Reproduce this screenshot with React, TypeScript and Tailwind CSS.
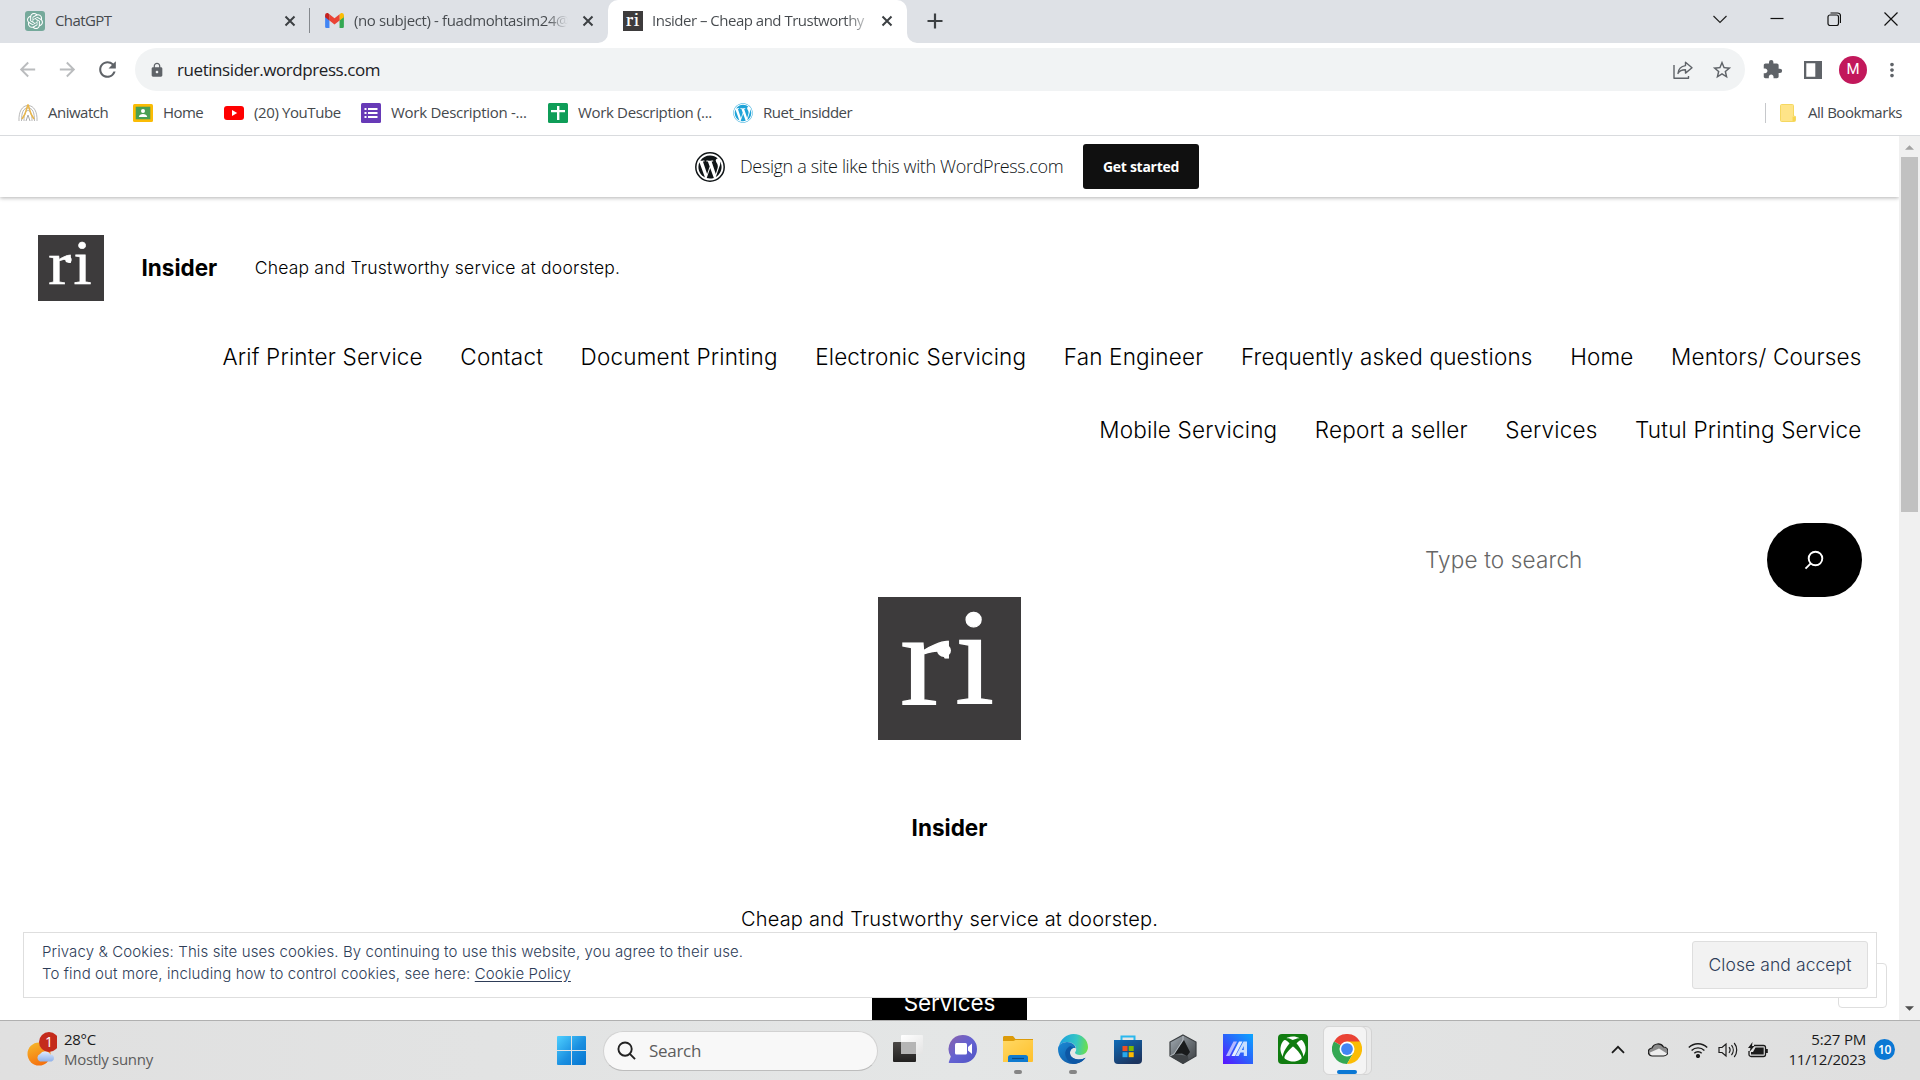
import type { ReactNode } from "react";
import { SiOpenai } from "react-icons/si";
import { FaWordpress, FaXbox } from "react-icons/fa";
import {
  MdArrowBack,
  MdArrowForward,
  MdExtension,
  MdLock,
  MdMoreVert,
  MdRefresh,
  MdStarBorder,
} from "react-icons/md";

function CloseGlyph() {
  return (
    <svg viewBox="0 0 12 12" className="size-3 shrink-0" stroke="#3c4043" strokeWidth="2" fill="none">
      <path d="M1.5 1.5l9 9M10.5 1.5l-9 9" />
    </svg>
  );
}

function RiLogo({ className }: { className: string }) {
  return (
    <svg viewBox="0 0 143 143" className={className}>
      <rect width="143" height="143" fill="#3d3b3c" />
      <g fill="#fff" stroke="#fff" strokeWidth="1.2" fontSize="133" fontFamily="Liberation Serif, serif">
        <text transform="translate(22 106.5) scale(1.12 1)">r</text>
        <text transform="translate(77 106.500) scale(1.060 1.030)">i</text>
      </g>
      <ellipse cx="66" cy="53.500" rx="7" ry="6.500" fill="#fff" />
    </svg>
  );
}

function Gmail() {
  return (
    <svg viewBox="0 0 20 16" className="h-[15px] w-[19px] shrink-0">
      <path d="M0 2.5v12A1.4 1.4 0 0 0 1.4 16H4.6V6z" fill="#4285f4" />
      <path d="M20 2.5v12a1.4 1.4 0 0 1-1.4 1.5h-3.2V6z" fill="#34a853" />
      <path d="M15.4 1.3V8L20 4.4V2.2C20 .2 17.8-.6 16.4.5z" fill="#fbbc04" />
      <path d="M4.6 8V1.4L10 5.6l5.4-4.2V8L10 12.200z" fill="#ea4335" />
      <path d="M0 2.200v2.200L4.600 8V1.400L3.600.5C2.200-.6 0 .2 0 2.200z" fill="#c5221f" />
    </svg>
  );
}

function TabStrip() {
  return (
    <div className="flex h-[43px] bg-[#dee1e6] text-[15px] text-[#45494d]">
      <div className="flex w-[310px] items-center pb-0.5 pl-[25px]">
        <div className="flex size-5 items-center justify-center rounded-[3px] bg-[#75a99b]">
          <SiOpenai className="size-4 text-white" />
        </div>
        <span className="ml-2.5 flex-1 tracking-[-0.6px]">ChatGPT</span>
        <div className="mr-[13px]"><CloseGlyph /></div>
        <div className="h-[25px] w-px bg-[#84888d]" />
      </div>
      <div className="flex w-[298px] items-center pb-0.5 pl-[15px]">
        <Gmail />
        <span className="ml-2.5 w-[214px] overflow-hidden bg-linear-to-r from-[#45494d] from-90% to-transparent bg-clip-text whitespace-nowrap tracking-[-0.39px] text-transparent">
          (no subject) - fuadmohtasim24@
        </span>
        <div className="ml-3.5"><CloseGlyph /></div>
      </div>
      <div className="relative flex w-[299px] items-center rounded-t-[10px] bg-white pb-0.5 pl-[15px]">
        <svg viewBox="0 0 10 10" className="absolute bottom-0 -left-2.5 size-2.5" fill="#fff">
          <path d="M10 0v10H0A10 10 0 0 0 10 0z" />
        </svg>
        <svg viewBox="0 0 10 10" className="absolute -right-2.5 bottom-0 size-2.5" fill="#fff">
          <path d="M0 0v10h10A10 10 0 0 1 0 0z" />
        </svg>
        <RiLogo className="size-5" />
        <span className="ml-[9px] w-[214px] overflow-hidden bg-linear-to-r from-[#45494d] from-90% to-[#45494d]/30 bg-clip-text whitespace-nowrap tracking-[-0.5px] text-transparent">
          Insider – Cheap and Trustworthy
        </span>
        <div className="ml-[15px]"><CloseGlyph /></div>
      </div>
      <svg viewBox="0 0 16 16" className="mt-[13px] ml-5 size-4" stroke="#3c4043" strokeWidth="2.200" fill="none">
        <path d="M8 0.500v15M.5 8h15" />
      </svg>
      <div className="ml-auto flex items-center gap-[43px] pr-[22px] pb-[5px]">
        <svg viewBox="0 0 14 14" className="size-3.5" stroke="#222" strokeWidth="1.200" fill="none"><path d="M.5 4L7 10.500 13.500 4" /></svg>
        <svg viewBox="0 0 14 14" className="size-3.5" stroke="#111" strokeWidth="1.200" fill="none"><path d="M.5 6.500h13" /></svg>
        <svg viewBox="0 0 14 14" className="size-3.5" stroke="#111" strokeWidth="1.200" fill="none">
          <rect x="1" y="3" width="10.500" height="10.500" rx="2" />
          <path d="M3.500 1H10.500a3 3 0 0 1 3 3v7" />
        </svg>
        <svg viewBox="0 0 14 14" className="size-3.5" stroke="#111" strokeWidth="1.200" fill="none"><path d="M.5.5l13 13M13.500.5l-13 13" /></svg>
      </div>
    </div>
  );
}

function Toolbar() {
  return (
    <div className="flex h-[53px] items-center bg-white pl-4 text-[#5f6368]">
      <MdArrowBack className="size-[23px] text-[#babcbe]" />
      <MdArrowForward className="ml-[17px] size-[23px] text-[#babcbe]" />
      <MdRefresh className="ml-4 size-[25px]" />
      <div className="ml-[15px] flex h-[43px] w-[1610px] items-center rounded-full bg-[#f1f3f4]">
        <MdLock className="ml-3.5 size-4" />
        <span className="ml-3 text-[17px] tracking-[-0.43px] text-[#202124]">ruetinsider.wordpress.com</span>
        <svg viewBox="0 0 20 20" className="mr-[18px] ml-auto size-5" fill="none" stroke="#5f6368" strokeWidth="1.400" strokeLinejoin="round">
          <path d="M1 5v13.300h14.500V16" />
          <path d="M12.500 2.200L19 7.700l-6.500 5.400V9.800C9 9.800 6.500 10.700 5 13.500 5.300 9.500 8 6.200 12.500 5.600z" />
        </svg>
        <MdStarBorder className="mr-3 size-[22px]" />
      </div>
      <MdExtension className="ml-[17px] size-[21px]" />
      <svg viewBox="0 0 18 18" className="ml-[21px] size-[18px]">
        <path d="M0 0h18v18H0zM2.300 2.300v13.400h9V2.300z" fill="#5f6368" fillRule="evenodd" />
      </svg>
      <div className="ml-[17px] flex size-7 items-center justify-center rounded-full bg-[#c2185b] font-['Roboto'] text-[15px] text-white">M</div>
      <MdMoreVert className="ml-3.5 size-[22px]" />
    </div>
  );
}

function Bookmark({ icon, label, className }: { icon: ReactNode; label: string; className: string }) {
  return (
    <div className={`flex items-center gap-2.5 whitespace-nowrap ${className}`}>
      {icon}
      <span className="pb-0.5">{label}</span>
    </div>
  );
}

function BookmarksBar() {
  return (
    <div className="flex h-10 items-center border-b border-[#d9dbde] bg-white pb-[5px] pl-[18px] text-[15px] text-[#45494d]">
      <Bookmark
        className="w-[115px] tracking-[-0.5px]"
        label="Aniwatch"
        icon={
          <svg viewBox="0 0 20 20" className="size-5" fill="none" strokeWidth="1">
            <path d="M1 18C.5 9 4 2.500 10 2.500S19.500 9 19 18M3.500 18c0-9 2-13 6.500-13s6.500 4 6.500 13M6 18c0-7 1.500-10.500 4-10.500s4 3.500 4 10.500" stroke="#b8b8b8" />
            <path d="M10 1.500L7 11l-3 5M10 1.500L13 11l3 5" stroke="#e9b64b" strokeWidth="1.500" />
            <path d="M8 18l2-6 2 6" stroke="#aaa" />
          </svg>
        }
      />
      <Bookmark
        className="w-[91px] tracking-[-0.55px]"
        label="Home"
        icon={
          <svg viewBox="0 0 20 18" className="h-[18px] w-5">
            <rect width="20" height="18" rx="1.500" fill="#fbbc05" />
            <rect x="2.700" y="2.700" width="14.600" height="12.600" fill="#4a9f52" />
            <circle cx="10" cy="7" r="2" fill="#fff" />
            <path d="M5.800 13c0-2 2.300-3 4.200-3s4.200 1 4.200 3z" fill="#fff" />
          </svg>
        }
      />
      <Bookmark
        className="w-[137px] tracking-[-0.4px]"
        label="(20) YouTube"
        icon={
          <svg viewBox="0 0 20 14" className="h-3.5 w-5">
            <rect width="20" height="14" rx="3" fill="#f00" />
            <path d="M8 4l5.200 3L8 10z" fill="#fff" />
          </svg>
        }
      />
      <Bookmark
        className="w-[187px] tracking-[-0.28px]"
        label="Work Description -..."
        icon={
          <svg viewBox="0 0 20 20" className="size-5">
            <rect width="20" height="20" rx="1.500" fill="#673ab7" />
            <path d="M3.500 5h2v2h-2zm3.500 0h9.500v2H7zm-3.500 4h2v2h-2zM7 9h9.500v2H7zm-3.500 4h2v2h-2zM7 13h9.500v2H7z" fill="#fff" />
          </svg>
        }
      />
      <Bookmark
        className="w-[185px] tracking-[-0.34px]"
        label="Work Description (..."
        icon={
          <svg viewBox="0 0 20 20" className="size-5">
            <rect width="20" height="20" rx="1.500" fill="#0f9d58" />
            <path d="M9 3h2.400v4H17v2.200h-5.600V17H9V9.200H3V7h6z" fill="#fff" />
          </svg>
        }
      />
      <Bookmark
        className="tracking-[-0.5px]"
        label="Ruet_insidder"
        icon={<FaWordpress className="size-5 text-[#1fa3d8]" />}
      />
      <div className="ml-auto h-5 w-px bg-[#c6c8cb]" />
      <svg viewBox="0 0 16 18" className="ml-3.5 h-[18px] w-4">
        <path d="M1.500.5h11a1 1 0 0 1 1 1V12l2 .5v4a1 1 0 0 1-1 1h-13a1 1 0 0 1-1-1v-15a1 1 0 0 1 1-1z" fill="#fee488" stroke="#f5d860" />
        <path d="M12.500 12.500v4.500h2.500v-4z" fill="#f7d54f" />
      </svg>
      <span className="mr-[18px] ml-3 pb-0.5 tracking-[-0.46px]">All Bookmarks</span>
    </div>
  );
}

function Banner() {
  return (
    <div className="flex h-[61px] shrink-0 items-center bg-white pl-[695px] font-['Open_Sans',sans-serif] shadow-[0_1px_4px_rgba(0,0,0,0.3)]">
      <svg viewBox="0 0 30 30" className="size-[30px]">
        <circle cx="15" cy="15" r="14.200" fill="#fff" stroke="#101517" strokeWidth="1.500" />
        <svg x="1.500" y="1.500" width="27" height="27" viewBox="8 8 496 496">
          <path
            fill="#101517"
            d="M61.700 169.400l101.500 278C92.200 413 43.300 340.200 43.300 256c0-30.900 6.600-60.100 18.400-86.600zm337.900 75.900c0-26.300-9.400-44.500-17.500-58.700-10.800-17.500-20.900-32.400-20.900-49.900 0-19.600 14.800-37.800 35.700-37.800.9 0 1.800.1 2.800.2-37.900-34.700-88.300-55.900-143.700-55.900-74.300 0-139.700 38.100-177.800 95.900 5 .2 9.700.3 13.700.3 22.200 0 56.700-2.700 56.700-2.700 11.500-.7 12.800 16.200 1.400 17.500 0 0-11.500 1.300-24.300 2l77.500 230.400L249.800 247l-33.100-90.800c-11.500-.7-22.300-2-22.300-2-11.500-.7-10.100-18.200 1.300-17.500 0 0 35.100 2.700 56 2.700 22.200 0 56.700-2.700 56.700-2.700 11.500-.7 12.800 16.200 1.400 17.500 0 0-11.500 1.300-24.300 2l76.900 228.700 21.200-70.900c9-29.400 16-50.500 16-68.700zm-139.900 29.300l-63.800 185.500c19.100 5.600 39.200 8.700 60.100 8.700 24.800 0 48.500-4.300 70.600-12.100-.6-.9-1.100-1.900-1.500-2.900l-65.400-179.200zm183-120.700c.9 6.800 1.400 14 1.400 21.900 0 21.600-4 45.800-16.200 76.200l-65 187.900C426.200 403 468.700 334.500 468.700 256c0-37-9.400-71.800-26-102.100z"
          />
        </svg>
      </svg>
      <span className="ml-[15px] w-[343px] text-[18px] font-light whitespace-nowrap tracking-[-0.36px] text-[#101517]">
        Design a site like this with WordPress.com
      </span>
      <button className="h-[45px] w-[116px] rounded-[3px] bg-[#101010] pb-px text-[14px] font-bold tracking-[-0.27px] text-white">
        Get started
      </button>
    </div>
  );
}

const navItems = [
  "Arif Printer Service",
  "Contact",
  "Document Printing",
  "Electronic Servicing",
  "Fan Engineer",
  "Frequently asked questions",
  "Home",
  "Mentors/ Courses",
  "Mobile Servicing",
  "Report a seller",
  "Services",
  "Tutul Printing Service",
];

function Site() {
  return (
    <div className="relative flex h-full flex-1 flex-col overflow-hidden bg-white font-['Inter'] text-black">
      <Banner />
      <header className="mt-[38px] flex items-center pl-[38px]">
        <RiLogo className="size-[66px]" />
        <span className="ml-[37.5px] text-[22.5px] font-bold">Insider</span>
        <span className="ml-[37.5px] text-[17.5px] font-light tracking-[0.19px]">Cheap and Trustworthy service at doorstep.</span>
      </header>
      <nav className="mt-[39px] ml-[200px] flex flex-wrap justify-end gap-x-[37.5px] gap-y-[39px] pr-[37.5px] text-[22.5px] leading-[34px] font-light tracking-[0.18px]">
        {navItems.map((item) => (
          <a key={item}>{item}</a>
        ))}
      </nav>
      <div className="mt-[76px] flex items-center justify-end pr-[37px]">
        <span className="w-[342px] text-[22.5px] font-light tracking-[0.16px] text-[#666]">Type to search</span>
        <button className="flex h-[74px] w-[95px] items-center justify-center rounded-[37px] bg-black pr-0.5">
          <svg viewBox="0 0 20 20" className="size-5" stroke="#fff" strokeWidth="1.900" fill="none">
            <circle cx="11.500" cy="8.500" r="6.800" />
            <path d="M6.800 13.400L1.500 18.700" />
          </svg>
        </button>
      </div>
      <div className="flex flex-col items-center">
        <RiLogo className="size-[143px]" />
        <span className="mt-[71px] text-[22.5px] leading-[34px] font-bold">Insider</span>
        <span className="mt-[59px] text-[20px] leading-[30px] font-light tracking-[0.21px]">Cheap and Trustworthy service at doorstep.</span>
        <div className="mt-[41px] flex h-14 w-[155px] justify-center bg-black pt-[11px] text-[22.5px] leading-[34px] tracking-[-0.1px] text-white">
          Services
        </div>
      </div>
      <div className="absolute right-3 bottom-3 h-[45px] w-[49px] rounded-sm border border-[#dedede] bg-white" />
      <div className="absolute right-[22px] bottom-[22px] left-[23px] flex h-[66px] items-center justify-between border border-[#dedede] bg-white pr-2 pl-[18px] text-[15px] leading-[22px] text-[#2e3d58]">
        <p className="pb-1 font-light tracking-[0.11px]">
          Privacy &amp; Cookies: This site uses cookies. By continuing to use this website, you agree to their use.
          <br />
          To find out more, including how to control cookies, see here:{" "}
          <a className="underline underline-offset-2">Cookie Policy</a>
        </p>
        <button className="h-12 w-[176px] rounded-[3px] border border-[#dedede] bg-[#f2f2f2] text-[17.500px] font-light tracking-[0.08px]">Close and accept</button>
      </div>
    </div>
  );
}

function Scrollbar() {
  return (
    <div className="flex w-[21px] flex-col items-center bg-[#f0f0f0]">
      <svg viewBox="0 0 10 5" className="mt-[9px] h-[5px] w-[9px]" fill="#a3a3a3"><path d="M0 5l5-5 5 5z" /></svg>
      <div className="mt-[7px] h-[355px] w-[17px] bg-[#c1c1c1]" />
      <svg viewBox="0 0 10 5" className="mt-auto mb-[9px] h-[5px] w-[9px]" fill="#505050"><path d="M0 0l5 5 5-5z" /></svg>
    </div>
  );
}

function AppSlot({ children, dot }: { children: ReactNode; dot?: boolean }) {
  return (
    <div className="relative flex h-full w-[55px] items-center justify-center pb-[3px]">
      {children}
      {dot && <div className="absolute bottom-[6px] h-1 w-2 rounded-full bg-[#858585]" />}
    </div>
  );
}

function TaskbarApps() {
  return (
    <>
      <AppSlot>
        <svg viewBox="0 0 30 30" className="size-[30px]">
          <defs>
            <linearGradient id="tvDark" x1="0" y1="0" x2="0" y2="1"><stop stopColor="#4b4947" /><stop offset="1" stopColor="#222120" /></linearGradient>
            <linearGradient id="tvLight" x1="0" y1="0" x2="1" y2="1"><stop stopColor="#fff" /><stop offset="1" stopColor="#e4e4e4" /></linearGradient>
          </defs>
          <rect x="0" y="8" width="23" height="20" rx="1" fill="url(#tvDark)" />
          <rect x="8" y="1" width="22" height="19" rx="1" fill="url(#tvLight)" />
          <path d="M8 8h15v12H8z" fill="#b5b5b5" />
        </svg>
      </AppSlot>
      <AppSlot>
        <svg viewBox="0 0 30 30" className="size-[30px]">
          <defs><linearGradient id="chat" x1="0" y1="0" x2="1" y2="1"><stop stopColor="#8b62ab" /><stop offset=".5" stopColor="#6462d2" /><stop offset="1" stopColor="#4f54c4" /></linearGradient></defs>
          <path d="M15 1a14 14 0 1 1 0 28H1.500c-.8 0-1-.8-.5-1.500l1.800-5A14 14 0 0 1 15 1z" fill="url(#chat)" />
          <rect x="7" y="9" width="12" height="11.500" rx="1.500" fill="#fff" />
          <path d="M20 13l4-3.500v10.500l-4-3.500z" fill="#fff" />
        </svg>
      </AppSlot>
      <AppSlot dot>
        <svg viewBox="0 0 30 28" className="h-7 w-[30px]">
          <defs><linearGradient id="folder" x1="0" y1="0" x2="1" y2="1"><stop stopColor="#ffd864" /><stop offset="1" stopColor="#ffc02b" /></linearGradient></defs>
          <path d="M0 2.200A1.500 1.500 0 0 1 1.500 1H10l2.500 3H30v6H0z" fill="#dc9b0a" />
          <path d="M0 6h10.500l2-1H30v21a1 1 0 0 1-1 1H0z" fill="url(#folder)" />
          <path d="M5 27v-4.500a2.500 2.500 0 0 1 2.500-2.500h15a2.500 2.500 0 0 1 2.500 2.500V27z" fill="#0f7bd0" />
          <path d="M9 23.500h12" stroke="#0a4a86" strokeWidth="1.200" />
        </svg>
      </AppSlot>
      <AppSlot dot>
        <svg viewBox="0 0 30 30" className="size-[30px]">
          <defs>
            <linearGradient id="edgeTop" x1="0" y1=".3" x2="1" y2=".4"><stop stopColor="#1b9fe0" /><stop offset=".6" stopColor="#35c6c4" /><stop offset="1" stopColor="#6bdf4d" /></linearGradient>
            <linearGradient id="edgeLow" x1="0" y1="0" x2="1" y2="1"><stop stopColor="#1b8ad6" /><stop offset="1" stopColor="#0c4c98" /></linearGradient>
          </defs>
          <path d="M1 12C2.500 5 8.500 0 15.500 0 24 0 30 6 30 13c0 5-3.800 8-8 8-3 0-5-1-5-2.200 0-.8 1.200-1.500 1.200-3.800C18.200 11 14 8 9.500 8 5 8 2 10 1 12z" fill="url(#edgeTop)" />
          <path d="M0 15c0-4 4-7 9-7 4.800 0 8.700 3 8.700 6.500-2-1.500-5.700.5-5.700 4.500 0 4 4.500 6.500 9 6.500 3 0 5-1 6.500-1.800C25 27.500 20.500 30 15 30 6.500 30 0 23.500 0 15z" fill="url(#edgeLow)" />
          <path d="M12.500 12c-4 2-6 5.500-5 9.500 1 4.500 4.500 7.500 9 8.200C22 29 26 26 27.500 23.700c-5 3-15.500 2.300-15.500-4.700 0-3.500 2-5 4-5z" fill="#0d57a5" />
        </svg>
      </AppSlot>
      <AppSlot>
        <svg viewBox="0 0 30 30" className="size-[30px]">
          <defs><linearGradient id="store" x1="0" y1="0" x2=".6" y2="1"><stop stopColor="#0f6cb8" /><stop offset="1" stopColor="#1c3560" /></linearGradient></defs>
          <path d="M8.500 7V2.500h13V7" fill="none" stroke="#2ab8ee" strokeWidth="2" />
          <path d="M1 6h28v20a4 4 0 0 1-4 4H5a4 4 0 0 1-4-4z" fill="url(#store)" />
          <path d="M9.500 12h5v5h-5z" fill="#f25022" /><path d="M15.700 12h5v5h-5z" fill="#7fba00" />
          <path d="M9.500 18.200h5v5h-5z" fill="#28a8ea" /><path d="M15.700 18.200h5v5h-5z" fill="#ffb900" />
        </svg>
      </AppSlot>
      <AppSlot>
        <svg viewBox="0 0 30 30" className="size-[30px]">
          <defs><linearGradient id="hex" x1="0" y1="0" x2="1" y2="1"><stop stopColor="#a4adb5" /><stop offset=".5" stopColor="#6c7277" /><stop offset="1" stopColor="#3a3d40" /></linearGradient></defs>
          <path d="M15 1l13 7v14l-13 7.500L2 22V8z" fill="url(#hex)" stroke="#3b3f42" strokeWidth="1.200" />
          <path d="M2 22l5-2 13 2 .5 4L15 29.500z" fill="#3e4245" />
          <path d="M16 6l6 12-3 4-5-2.500-7.500.5z" fill="#191b1c" />
          <path d="M15 2v4L6 20l-4 2" stroke="#c4cad0" strokeWidth=".8" fill="none" />
        </svg>
      </AppSlot>
      <AppSlot>
        <svg viewBox="0 0 30 30" className="size-[30px]">
          <defs><linearGradient id="asus" x1="0" y1="1" x2="1" y2="0"><stop stopColor="#5a12ff" /><stop offset=".5" stopColor="#2b62fb" /><stop offset="1" stopColor="#0ba6ff" /></linearGradient></defs>
          <rect width="30" height="30" fill="url(#asus)" />
          <path d="M3 22L10.500 7.500H14L6.500 22z" fill="#b5b8ff" />
          <path d="M8.500 22L16 7.500h3.500L12 22z" fill="#e5efff" />
          <path d="M20.500 7.500H24V22h-3.200v-3.500h-3.300L15.700 22h-3.200zM20.800 12l-2 4h2z" fill="#c8deff" />
        </svg>
      </AppSlot>
      <AppSlot>
        <div className="flex size-[30px] items-center justify-center rounded-sm bg-[#107c10]">
          <FaXbox className="size-[26px] text-white" />
        </div>
      </AppSlot>
      <div className="relative flex h-full w-[55px] items-center justify-center">
        <div className="absolute top-[5px] left-[3px] h-[49px] w-[49px] rounded-md border border-[#d3d3d3] bg-[#ebebeb]" />
        <div className="absolute top-[5px] left-[3px] h-[49px] w-11 rounded-md border border-[#d6d6d6] bg-[#f4f4f4]" />
        <svg viewBox="0 0 48 48" className="relative mr-px mb-[3px] size-[30px]">
          <path d="M24 24L3.200 12A24 24 0 0 1 44.800 12z" fill="#ea4335" />
          <path d="M3.200 12A24 24 0 0 0 24 48l10.400-18z" fill="#34a853" />
          <path d="M44.800 12A24 24 0 0 1 24 48l10.400-18L24 12z" fill="#fbbc05" />
          <circle cx="24" cy="24" r="12" fill="#fff" />
          <circle cx="24" cy="24" r="9.400" fill="#4285f4" />
        </svg>
        <div className="absolute bottom-[6px] left-[17px] h-1 w-5 rounded-full bg-[#0b78d4]" />
      </div>
    </>
  );
}

function Taskbar() {
  return (
    <div className="flex h-[60px] items-center border-t border-[#b0b0b0] bg-linear-to-r from-[#e0e0e0] via-[#e4e6e6] to-[#dfdfdf] text-[15px] text-[#1b1b1b]">
      <div className="flex w-[557px] items-center pb-1 pl-[25px]">
        <svg viewBox="0 0 32 36" className="h-9 w-8">
          <defs>
            <linearGradient id="sun" x1="0" y1="0" x2=".4" y2="1"><stop stopColor="#f6bb2c" /><stop offset="1" stopColor="#f5740f" /></linearGradient>
            <linearGradient id="cloud" x1="0" y1="0" x2="0" y2="1"><stop stopColor="#e0ecff" /><stop offset="1" stopColor="#8fb1ea" /></linearGradient>
          </defs>
          <circle cx="14" cy="23" r="11.500" fill="url(#sun)" />
          <path d="M15 30.500a4 4 0 0 1 0-7.500 6 6 0 0 1 10.500.5 3.600 3.600 0 0 1 1 7z" fill="url(#cloud)" />
          <circle cx="24" cy="11" r="10" fill="#c42b1c" />
          <text x="24" y="16" fontSize="14" textAnchor="middle" fill="#fff" fontFamily="Open Sans, sans-serif">1</text>
        </svg>
        <div className="ml-[7px] leading-5 tracking-[-0.3px]">
          <div>28°C</div>
          <div className="text-[#5c5c5c]">Mostly sunny</div>
        </div>
      </div>
      <svg viewBox="0 0 29 29" className="size-[29px]">
        <defs><linearGradient id="win" x1="0" y1="0" x2="1" y2="1"><stop stopColor="#4fd0ff" /><stop offset=".55" stopColor="#1a8fe0" /><stop offset="1" stopColor="#0474d0" /></linearGradient></defs>
        <path d="M0 1a1 1 0 0 1 1-1h13v14H0zM15 0h13a1 1 0 0 1 1 1v13H15zM0 15h14v14H1a1 1 0 0 1-1-1zM15 15h14v13a1 1 0 0 1-1 1H15z" fill="url(#win)" />
      </svg>
      <div className="mr-0.5 ml-[17px] flex h-10 w-[275px] items-center rounded-full border border-[#d2d2d2] border-b-[#bdbdbd] bg-[#f8f8f8] pl-[13px] text-[17px] tracking-[-0.3px] text-[#5d5d5d]">
        <svg viewBox="0 0 20 20" className="mr-[13px] size-[19px]" fill="none" stroke="#222" strokeWidth="2"><circle cx="8.500" cy="8.500" r="7" /><path d="M13.500 13.500l5.500 5.500" /></svg>
        Search
      </div>
      <TaskbarApps />
      <div className="ml-auto flex items-center pb-0.5">
        <svg viewBox="0 0 14 9" className="mr-[23px] h-[9px] w-3.5" fill="none" stroke="#1b1b1b" strokeWidth="1.800"><path d="M1 7.800L7 1.800l6 6" /></svg>
        <svg viewBox="0 0 20 15" className="mr-5 h-[15px] w-5">
          <path d="M4.500 14a4 4 0 0 1-.5-8A6.500 6.500 0 0 1 15.500 5a4.500 4.500 0 0 1 0 9z" fill="#8b8b8b" />
          <path d="M4 14a3.500 3.500 0 0 1-2-3.500L11 6.500l8 5a4 4 0 0 1-3.500 2.500z" fill="#ededed" />
          <path d="M4.500 14a4 4 0 0 1-.5-8A6.500 6.500 0 0 1 15.500 5a4.500 4.500 0 0 1 0 9z" fill="none" stroke="#1b1b1b" strokeWidth="1.200" />
        </svg>
        <svg viewBox="0 0 20 16" className="mr-2.5 h-4 w-5" fill="none" stroke="#1b1b1b" strokeWidth="1.400">
          <path d="M.8 5.500a13 13 0 0 1 18.400 0M3.600 8.500a9 9 0 0 1 12.800 0M6.300 11.300a5.200 5.200 0 0 1 7.400 0" />
          <circle cx="10" cy="14" r="1.400" fill="#1b1b1b" />
        </svg>
        <svg viewBox="0 0 20 16" className="mr-2.5 h-4 w-5" fill="none" stroke="#1b1b1b" strokeWidth="1.200">
          <path d="M1 5.500h3L8 2v12l-4-3.500H1z" />
          <path d="M11 5.200a4.500 4.500 0 0 1 0 5.600M13.500 3a8 8 0 0 1 0 10M16.200 1a11 11 0 0 1 0 14" />
        </svg>
        <svg viewBox="0 0 20 16" className="mr-5 h-4 w-5">
          <path d="M6 3.500h9.500a2 2 0 0 1 2 2v7a2 2 0 0 1-2 2H3a2 2 0 0 1-2-2V9" fill="none" stroke="#1b1b1b" strokeWidth="1.300" />
          <path d="M7.500 5.500h8.200v7H3V10h2z" fill="#1b1b1b" />
          <path d="M18 7h1.800v4H18zM4.500 0L0 6h2.500L1.500 10 6.500 4H4z" fill="#1b1b1b" />
        </svg>
        <div className="w-[78px] pb-0.5 text-right leading-5 tracking-[-0.2px] whitespace-nowrap">
          <div>5:27 PM</div>
          <div>11/12/2023</div>
        </div>
        <div className="mr-[25px] ml-2 flex size-[21px] items-center justify-center rounded-full bg-[#0a78d4] text-[12px] font-semibold tracking-[-0.3px] text-white">10</div>
      </div>
    </div>
  );
}

export default function App() {
  return (
    <div className="flex h-[1080px] w-[1920px] flex-col overflow-hidden bg-white font-['Open_Sans',sans-serif]">
      <TabStrip />
      <Toolbar />
      <BookmarksBar />
      <div className="flex h-[884px]">
        <Site />
        <Scrollbar />
      </div>
      <Taskbar />
    </div>
  );
}
